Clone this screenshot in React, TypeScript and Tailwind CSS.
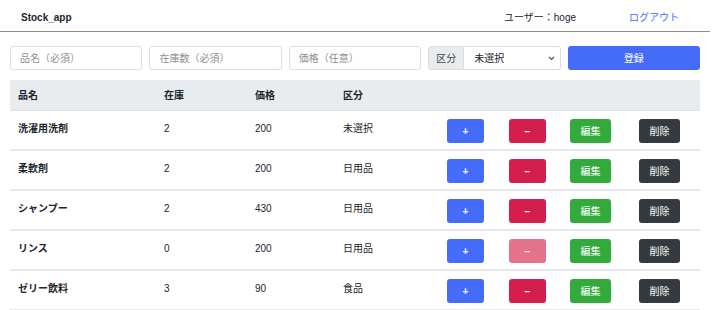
import React from "react";

type Row = { name: string; stock: number; price: number; cat: string };

const rows: Row[] = [
  { name: "洗濯用洗剤", stock: 2, price: 200, cat: "未選択" },
  { name: "柔軟剤", stock: 2, price: 200, cat: "日用品" },
  { name: "シャンプー", stock: 2, price: 430, cat: "日用品" },
  { name: "リンス", stock: 0, price: 200, cat: "日用品" },
  { name: "ゼリー飲料", stock: 3, price: 90, cat: "食品" },
];

const grid =
  "grid grid-cols-[146px_91px_88px_104px_62px_61px_69px_69px]";

export default function App() {
  return (
    <div className="w-[720px] h-[310px] overflow-hidden bg-white text-[#212529] text-[10px] leading-[15px] font-['Liberation_Sans','Noto_Sans_CJK_JP',sans-serif]">
      {/* header */}
      <div className="flex h-[32px] w-[710px] items-center border-b border-[#8c8c8c] pt-[4px]">
        <div className="pl-[21px] font-bold">Stock_app</div>
        <div className="ml-auto">ユーザー：hoge</div>
        <div className="ml-[53px] mr-[31px] text-[#4a6cf7]">ログアウト</div>
      </div>

      {/* form */}
      <div className="mx-[10px] mt-[14px] grid w-[690px] grid-cols-5 gap-[7px]">
        <input
          className="h-[24px] rounded-[3px] border border-[#dcdfe3] px-[9px] outline-none placeholder:text-[#8f8f8f]"
          placeholder="品名（必須）"
        />
        <input
          className="h-[24px] rounded-[3px] border border-[#dcdfe3] px-[9px] outline-none placeholder:text-[#8f8f8f]"
          placeholder="在庫数（必須）"
        />
        <input
          className="h-[24px] rounded-[3px] border border-[#dcdfe3] px-[9px] outline-none placeholder:text-[#8f8f8f]"
          placeholder="価格（任意）"
        />
        <div className="flex h-[24px]">
          <div className="flex w-[36px] items-center justify-center rounded-l-[3px] border border-[#dcdfe3] bg-[#e9ecef] text-[#444]">
            区分
          </div>
          <div className="flex flex-1 items-center rounded-r-[3px] border border-l-0 border-[#dcdfe3] pl-[10px] pr-[5px]">
            <span>未選択</span>
            <svg className="ml-auto" width="7" height="5" viewBox="0 0 7 5">
              <path d="M1 1 L3.5 3.5 L6 1" fill="none" stroke="#555" strokeWidth="1.2" />
            </svg>
          </div>
        </div>
        <button className="h-[24px] rounded-[3px] bg-[#456cf8] text-white">登録</button>
      </div>

      {/* table */}
      <div className="mx-[10px] mt-[10px] w-[690px]">
        <div className={`${grid} h-[31px] items-center border-b border-[#dee2e6] bg-[#e9ecef] font-bold`}>
          <div className="pl-[8px]">品名</div>
          <div className="pl-[8px]">在庫</div>
          <div className="pl-[8px]">価格</div>
          <div className="pl-[8px]">区分</div>
          <div />
          <div />
          <div />
          <div />
        </div>
        {rows.map((r) => (
          <div key={r.name} className={`${grid} h-[40px] border-b-2 border-[#e6e7eb]`}>
            <div className="pl-[8px] pt-[10px] font-bold">{r.name}</div>
            <div className="pl-[8px] pt-[10px]">{r.stock}</div>
            <div className="pl-[8px] pt-[10px]">{r.price}</div>
            <div className="pl-[8px] pt-[10px]">{r.cat}</div>
            <div className="pl-[8px] pt-[8px]">
              <button className="flex h-[24px] w-[37px] items-center justify-center rounded-[3px] bg-[#456cf8] font-bold text-white">
                +
              </button>
            </div>
            <div className="pl-[8px] pt-[8px]">
              <button
                className={`flex h-[24px] w-[37px] items-center justify-center rounded-[3px] font-bold text-white ${
                  r.stock === 0 ? "bg-[#e5728b]" : "bg-[#d41f4c]"
                }`}
              >
                −
              </button>
            </div>
            <div className="pl-[8px] pt-[8px]">
              <button className="flex h-[24px] w-[41px] items-center justify-center rounded-[3px] bg-[#33ab3c] text-white">
                編集
              </button>
            </div>
            <div className="pl-[8px] pt-[8px]">
              <button className="flex h-[24px] w-[41px] items-center justify-center rounded-[3px] bg-[#343a40] text-white">
                削除
              </button>
            </div>
          </div>
        ))}
      </div>
    </div>
  );
}
